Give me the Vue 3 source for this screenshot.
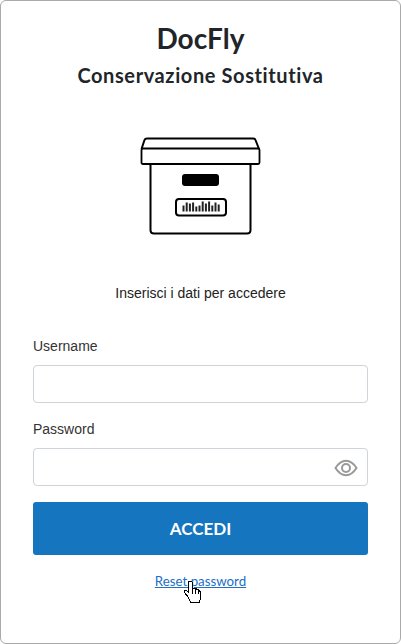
<script setup>
const bars = [6, 9, 8, 9, 5, 6, 10, 8, 10, 6, 9, 7];
</script>

<template>
  <main class="card">
    <h1 class="title">DocFly</h1>
    <h2 class="subtitle">Conservazione Sostitutiva</h2>

    <svg class="box" width="122" height="100" viewBox="0 0 122 100" fill="none" stroke="#000" stroke-width="2" stroke-linejoin="round">
      <path d="M1.500 13 L4.500 4 Q5 2.500 7 2.500 L113 2.500 Q115 2.500 115.500 4 L119 13" />
      <path d="M3 12.500 L118 12.500 Q119.500 12.500 119.500 14 L119.500 26.500 Q119.500 28 118 28 L3 28 Q1.500 28 1.500 26.500 L1.500 14 Q1.500 12.500 3 12.500 Z" stroke-width="1.800" />
      <path d="M10.500 28 L10.500 94 Q10.500 97.500 14 97.500 L107 97.500 Q110.500 97.500 110.500 94 L110.500 28" />
      <rect x="42" y="38" width="37" height="12" rx="3" fill="#000" stroke="none" />
      <rect x="36" y="63" width="50" height="16.500" rx="3" stroke-width="2" />
      <g stroke-width="2" stroke="#222">
        <line v-for="(h, i) in bars" :key="i" :x1="43.500 + i * 3.200" :x2="43.500 + i * 3.200" :y1="75.500 - h" y2="75.500" />
      </g>
    </svg>

    <p class="intro">Inserisci i dati per accedere</p>

    <form class="form" @submit.prevent>
      <label class="field">
        <span class="label">Username</span>
        <input class="input" type="text" />
      </label>
      <label class="field">
        <span class="label">Password</span>
        <span class="control">
          <input class="input" type="password" />
          <svg class="eye" width="24" height="24" viewBox="0 0 24 24" fill="none" stroke="#999" stroke-width="2">
            <path d="M1.500 12 C5 6.500 8.500 4.800 12 4.800 C15.500 4.800 19 6.500 22.500 12 C19 17.500 15.500 19.200 12 19.200 C8.500 19.200 5 17.500 1.500 12 Z" />
            <circle cx="12" cy="12" r="4" />
          </svg>
        </span>
      </label>
      <button class="submit" type="submit">ACCEDI</button>
    </form>

    <div class="reset">
      <a class="link" href="#">Reset password</a>
      <svg class="cursor" width="18" height="24" viewBox="0 0 18 24" stroke="#000" stroke-width="1" fill="#fff" shape-rendering="crispEdges">
        <path d="M4.500 .500 L7.500 .500 L8.500 1.500 L8.500 7.500 L11.500 7.500 L13.500 8.500 L15.500 9.500 L16.500 11.500 L16.500 17.500 L15.500 21.500 L6.500 21.500 L4.500 16.500 L.500 11.500 L.500 9.500 L2.500 9.500 L4.500 11.500 Z" />
        <path d="M8.500 8 V13 M11.500 8 V13 M14 9.500 V13" fill="none" />
      </svg>
    </div>
  </main>
</template>

<style>
html, body { margin: 0; background: #fff; }
</style>

<style scoped>
.card {
  box-sizing: border-box;
  width: 401px;
  height: 644px;
  padding: 20px 32px 0;
  border: 1px solid #aaa;
  border-radius: 6px;
  background: #fff;
  display: flex;
  flex-direction: column;
  align-items: center;
  color: #222;
}
.title {
  margin: 0;
  font: 700 28px/34px Lato, sans-serif;
  color: #212529;
}
.subtitle {
  margin: 5px 0 0;
  font: 700 20px/30px Lato, sans-serif;
  font-variant-ligatures: none;
  letter-spacing: 0.6px;
  color: #212529;
}
.box {
  margin-top: 46px;
  flex: none;
}
.intro {
  margin: 49px 0 0;
  font: 14px/17px "Liberation Sans", Arial, sans-serif;
  color: #222;
}
.form {
  align-self: stretch;
  margin-top: 36px;
  display: flex;
  flex-direction: column;
}
.field {
  display: flex;
  flex-direction: column;
  margin-bottom: 16px;
}
.field + .field {
  margin-top: 2px;
}
.label {
  font: 14px/17px "Liberation Sans", Arial, sans-serif;
  color: #333;
  margin-bottom: 10px;
}
.control {
  position: relative;
  display: block;
}
.input {
  box-sizing: border-box;
  display: block;
  width: 100%;
  height: 38px;
  padding: 0 12px;
  border: 1px solid #ced4da;
  border-radius: 4px;
  background: #fff;
  outline: none;
}
.eye {
  position: absolute;
  right: 10.500px;
  top: 8px;
}
.submit {
  height: 53px;
  border: 0;
  border-radius: 3px;
  background: #1675bf;
  color: #fff;
  font: 700 17px Lato, sans-serif;
}
.reset {
  position: relative;
  margin-top: 17px;
}
.link {
  font: 13.300px/15px Lato, sans-serif;
  color: #2170c4;
  text-decoration: underline;
}
.cursor {
  position: absolute;
  left: 29px;
  top: 9px;
}
</style>
